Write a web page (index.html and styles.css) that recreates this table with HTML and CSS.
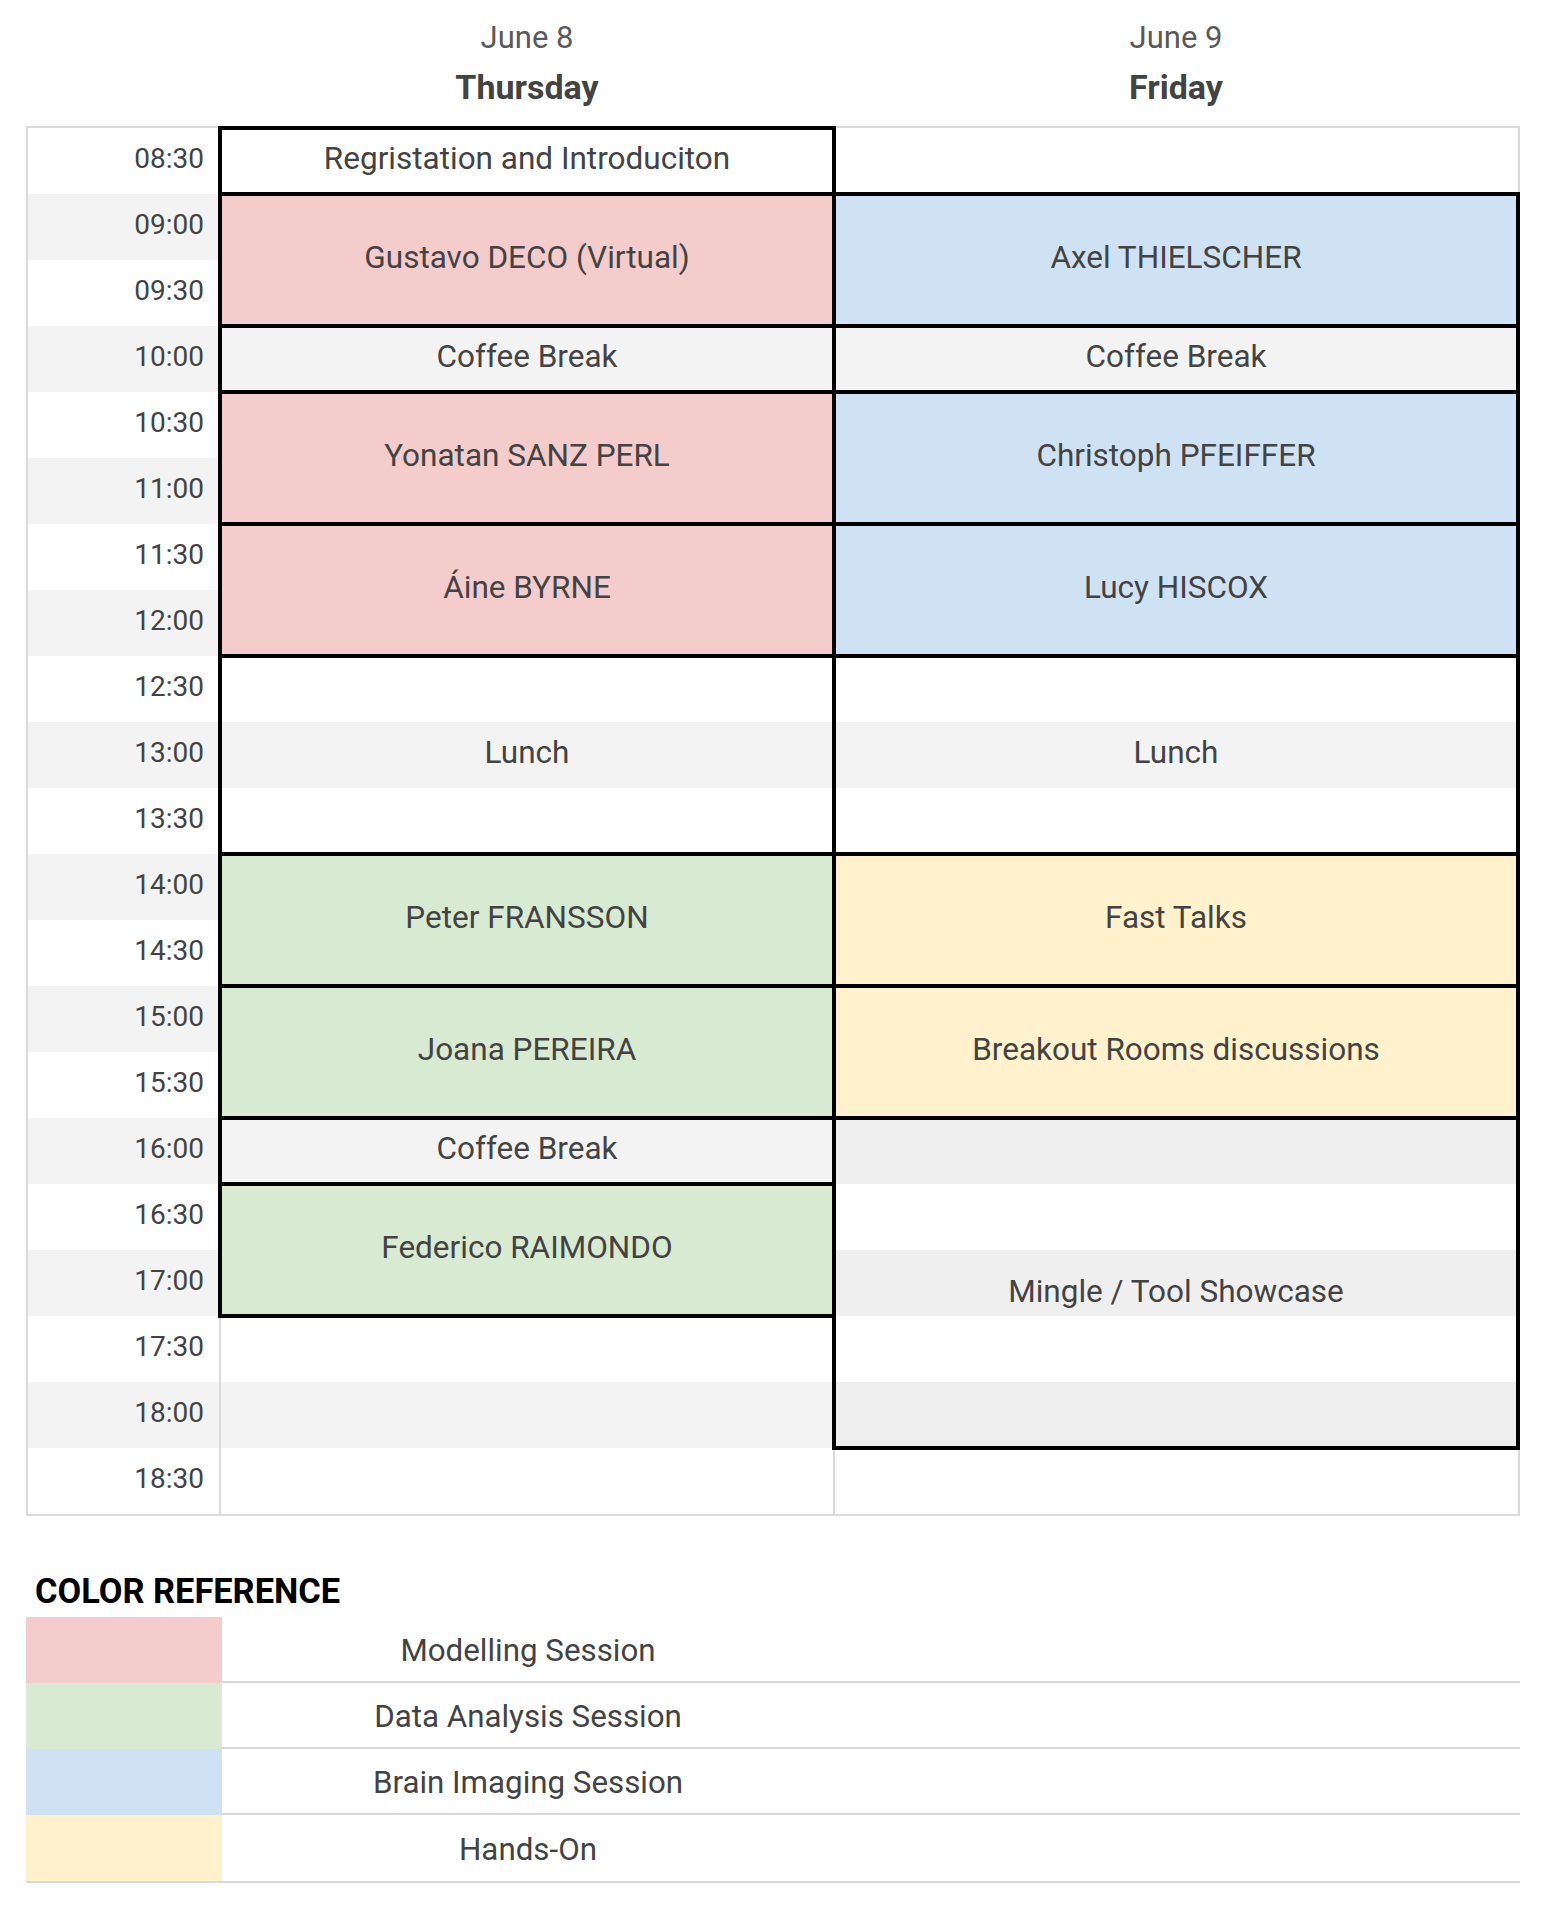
FILE: index.html
```html
<!DOCTYPE html>
<html lang="en">
<head>
<meta charset="utf-8">
<title>Schedule</title>
<link rel="stylesheet" href="styles.css">
</head>
<body>
<div class="page">
  <div class="days">
    <div class="day-spacer"></div>
    <div class="day">
      <div class="day-date">June 8</div>
      <div class="day-name">Thursday</div>
    </div>
    <div class="day">
      <div class="day-date">June 9</div>
      <div class="day-name">Friday</div>
    </div>
  </div>

  <div class="schedule">
    <div class="time">08:30</div>
    <div class="time">09:00</div>
    <div class="time">09:30</div>
    <div class="time">10:00</div>
    <div class="time">10:30</div>
    <div class="time">11:00</div>
    <div class="time">11:30</div>
    <div class="time">12:00</div>
    <div class="time">12:30</div>
    <div class="time">13:00</div>
    <div class="time">13:30</div>
    <div class="time">14:00</div>
    <div class="time">14:30</div>
    <div class="time">15:00</div>
    <div class="time">15:30</div>
    <div class="time">16:00</div>
    <div class="time">16:30</div>
    <div class="time">17:00</div>
    <div class="time">17:30</div>
    <div class="time">18:00</div>
    <div class="time">18:30</div>

    <div class="event thu row-1 span-1 plain">Regristation and Introduciton</div>
    <div class="event thu row-2 span-2 modelling">Gustavo DECO (Virtual)</div>
    <div class="event thu row-4 span-1 break">Coffee Break</div>
    <div class="event thu row-5 span-2 modelling">Yonatan SANZ PERL</div>
    <div class="event thu row-7 span-2 modelling">Áine BYRNE</div>
    <div class="event thu row-9 span-3 banded">Lunch</div>
    <div class="event thu row-12 span-2 analysis">Peter FRANSSON</div>
    <div class="event thu row-14 span-2 analysis">Joana PEREIRA</div>
    <div class="event thu row-16 span-1 break">Coffee Break</div>
    <div class="event thu row-17 span-2 analysis">Federico RAIMONDO</div>
    <div class="empty thu row-19 span-3"></div>

    <div class="event fri row-2 span-2 imaging">Axel THIELSCHER</div>
    <div class="event fri row-4 span-1 break">Coffee Break</div>
    <div class="event fri row-5 span-2 imaging">Christoph PFEIFFER</div>
    <div class="event fri row-7 span-2 imaging">Lucy HISCOX</div>
    <div class="event fri row-9 span-3 banded">Lunch</div>
    <div class="event fri row-12 span-2 handson">Fast Talks</div>
    <div class="event fri row-14 span-2 handson">Breakout Rooms discussions</div>
    <div class="event fri row-16 span-5 mingle">Mingle / Tool Showcase</div>
    <div class="empty fri row-21 span-1"></div>
  </div>

  <section class="legend">
    <h2 class="legend-title">COLOR REFERENCE</h2>
    <div class="legend-row">
      <div class="swatch modelling"></div>
      <div class="legend-label">Modelling Session</div>
      <div class="legend-fill"></div>
    </div>
    <div class="legend-row">
      <div class="swatch analysis"></div>
      <div class="legend-label">Data Analysis Session</div>
      <div class="legend-fill"></div>
    </div>
    <div class="legend-row">
      <div class="swatch imaging"></div>
      <div class="legend-label">Brain Imaging Session</div>
      <div class="legend-fill"></div>
    </div>
    <div class="legend-row">
      <div class="swatch handson"></div>
      <div class="legend-label">Hands-On</div>
      <div class="legend-fill"></div>
    </div>
  </section>
</div>
</body>
</html>
```
FILE: styles.css
```css
* {
  box-sizing: border-box;
}

html, body {
  margin: 0;
  padding: 0;
  background: #ffffff;
}

body {
  font-family: Roboto, "Liberation Sans", Arial, sans-serif;
  color: #434343;
}

.page {
  width: 1554px;
  padding-left: 26px;
}

/* ---------- day headers ---------- */
.days {
  display: grid;
  grid-template-columns: 194px 614px 684px;
  padding-top: 20px;
  height: 126px;
}

.day {
  display: flex;
  flex-direction: column;
  align-items: center;
}

.day-date {
  font-size: 31px;
  line-height: 36px;
  color: #595959;
}

.day-name {
  margin-top: 11px;
  font-size: 34px;
  line-height: 40px;
  font-weight: 700;
  color: #434343;
}

/* ---------- schedule grid ---------- */
.schedule {
  display: grid;
  width: 1494px;
  grid-template-columns: 192px 614px 684px;
  grid-template-rows: repeat(21, 66px);
  border: 2px solid #dadada;
  background: repeating-linear-gradient(to bottom, #ffffff 0 66px, #f3f3f3 66px 132px);
}

.time {
  grid-column: 1;
  display: flex;
  align-items: center;
  justify-content: flex-end;
  padding-right: 16px;
  padding-bottom: 5px;
  font-size: 28px;
  color: #434343;
}

.event {
  margin: -2px;
  border: 4px solid #000000;
  padding-bottom: 5px;
  display: flex;
  align-items: center;
  justify-content: center;
  text-align: center;
  font-size: 31.5px;
  color: #434343;
  position: relative;
}

.thu { grid-column: 2; }
.fri { grid-column: 3; }

.row-1 { grid-row-start: 1; }
.row-2 { grid-row-start: 2; }
.row-4 { grid-row-start: 4; }
.row-5 { grid-row-start: 5; }
.row-7 { grid-row-start: 7; }
.row-9 { grid-row-start: 9; }
.row-12 { grid-row-start: 12; }
.row-14 { grid-row-start: 14; }
.row-16 { grid-row-start: 16; }
.row-17 { grid-row-start: 17; }
.row-19 { grid-row-start: 19; }
.row-21 { grid-row-start: 21; }

.span-1 { grid-row-end: span 1; }
.span-2 { grid-row-end: span 2; }
.span-3 { grid-row-end: span 3; }
.span-5 { grid-row-end: span 5; }

.plain { background: #ffffff; }
.break { background: #f3f3f3; }
.banded { background: transparent; }
.modelling { background: #f4cccc; }
.analysis { background: #d9ead3; }
.imaging { background: #cfe2f3; }
.handson { background: #fff2cc; }

.mingle {
  background: repeating-linear-gradient(to bottom, #efefef 0 66px, #ffffff 66px 132px);
  background-origin: border-box;
  background-position: 0 2px;
  padding-top: 16px;
  padding-bottom: 0;
}

.empty {
  margin-left: -1px;
  border-left: 2px solid #dadada;
}

/* ---------- legend ---------- */
.legend {
  margin-top: 55px;
}

.legend-title {
  margin: 0;
  padding-left: 9px;
  font-size: 34.4px;
  line-height: 40px;
  font-weight: 700;
  color: #000000;
}

.legend-title + .legend-row {
  margin-top: 6px;
}

.legend-row {
  display: grid;
  grid-template-columns: 196px 612px 686px;
  width: 1494px;
  height: 66px;
}

.legend-label {
  display: flex;
  align-items: center;
  justify-content: center;
  padding-top: 2px;
  font-size: 31.3px;
  color: #434343;
  border-bottom: 2px solid #d9d9d9;
}

.legend-fill {
  border-bottom: 2px solid #d9d9d9;
}

.legend-row:last-child {
  height: 68px;
}

.legend-row:last-child .swatch {
  border-bottom: 2px solid #d9d9d9;
}
```
